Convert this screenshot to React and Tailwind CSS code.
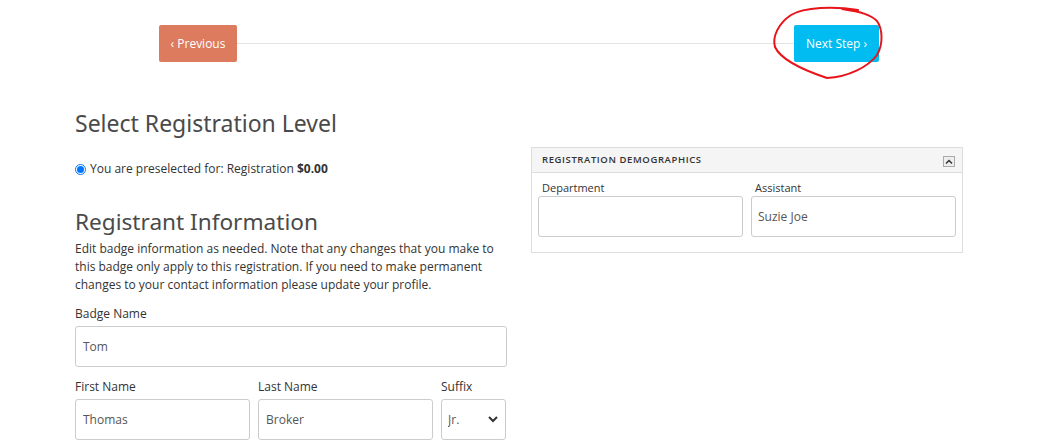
import React from 'react';

const font = { fontFamily: '"Open Sans", "Noto Sans", sans-serif' };
const headFont = { fontFamily: '"Noto Sans", sans-serif' };

const Field = ({ label, value, className = '' }) => (
  <div className={`flex flex-col ${className}`}>
    <label className="text-[12px] leading-[18px] text-[#333] mb-[3px]">{label}</label>
    <input
      readOnly
      value={value}
      className="h-[41px] w-full border border-[#ccc] rounded-[3px] px-[7px] text-[12px] text-[#555] bg-white outline-none"
    />
  </div>
);

const App = () => {
  return (
    <div className="w-[1039px] h-[446px] bg-white overflow-hidden text-[#333]" style={font}>
      {/* step navigation */}
      <div className="flex items-center ml-[159px] w-[720px] mt-[25px]">
        <button className="h-[37px] w-[78px] bg-[#dc7b5e] text-white text-[12px] rounded-[2px] flex items-center justify-center">
          ‹ Previous
        </button>
        <div className="flex-1 h-px bg-[#e3e3e3]" />
        <div className="relative">
          <button className="h-[37px] w-[85px] bg-[#00bcf0] text-white text-[12px] rounded-[2px] flex items-center justify-center">
            Next Step ›
          </button>
          <svg
            className="absolute left-[-22px] top-[-20px] pointer-events-none overflow-visible"
            width="112"
            height="77"
            viewBox="0 0 112 77"
            fill="none"
          >
            <path
              d="M86 5 C62 1 32 2 19 10 C7 18 0 31 3 42 C9 55 34 66 55 73 C76 72 96 62 105 50 C112 38 110 23 105 16 C99 10 90 7 70 4"
              stroke="#e8141a"
              strokeWidth="2"
              strokeLinecap="round"
            />
          </svg>
        </div>
      </div>

      {/* main content */}
      <div className="flex gap-[24px] ml-[75px] mt-[48px]">
        <div className="w-[432px] flex flex-col">
          <h2 className="text-[23px] leading-[26px] text-[#4a4a4a]" style={headFont}>
            Select Registration Level
          </h2>
          <div className="flex items-center mt-[24px] text-[12px] leading-[18px]">
            <span className="w-[11px] h-[11px] rounded-full border border-[#0075ff] flex items-center justify-center mr-[4px]">
              <span className="w-[7px] h-[7px] rounded-full bg-[#0075ff]" />
            </span>
            <span>
              You are preselected for: Registration <b className="font-bold">$0.00</b>
            </span>
          </div>
          <h2 className="text-[22.6px] leading-[26px] text-[#4a4a4a] mt-[31px]" style={headFont}>
            Registrant Information
          </h2>
          <p className="text-[12px] leading-[18px] mt-[5px] w-[430px]">
            Edit badge information as needed. Note that any changes that you make to this badge only apply to this
            registration. If you need to make permanent changes to your contact information please update your profile.
          </p>
          <Field label="Badge Name" value="Tom" className="mt-[11px]" />
          <div className="flex gap-[8px] mt-[11px]">
            <Field label="First Name" value="Thomas" className="w-[175px]" />
            <Field label="Last Name" value="Broker" className="w-[175px]" />
            <div className="flex flex-col w-[65px]">
              <label className="text-[12px] leading-[18px] mb-[3px]">Suffix</label>
              <div className="relative">
                <select
                  defaultValue="Jr."
                  className="appearance-none h-[41px] w-full border border-[#ccc] rounded-[3px] pl-[6px] text-[12px] text-[#555] bg-white outline-none"
                >
                  <option>Jr.</option>
                  <option>Sr.</option>
                </select>
                <svg className="absolute right-[8px] top-[16px] pointer-events-none" width="10" height="8" viewBox="0 0 10 8">
                  <path d="M1 2 L5 6 L9 2" stroke="#333" strokeWidth="2" fill="none" />
                </svg>
              </div>
            </div>
          </div>
        </div>

        <div className="w-[432px] mt-[37px] self-start border border-[#ddd]">
          <div className="h-[25px] bg-[#f5f5f5] border-b border-[#ddd] flex items-center justify-between px-[10px]">
            <span className="text-[9.5px] font-semibold tracking-[0.6px] text-[#333]">REGISTRATION DEMOGRAPHICS</span>
            <span className="w-[12px] h-[11px] border border-[#aaa] bg-[#eee] flex items-center justify-center mt-[3px] mr-[-3px]">
              <svg width="8" height="6" viewBox="0 0 8 6">
                <path d="M1 4.5 L4 1.5 L7 4.5" stroke="#333" strokeWidth="1.5" fill="none" />
              </svg>
            </span>
          </div>
          <div className="flex gap-[8px] px-[6px] pt-[7px] pb-[15px]">
            <div className="flex-1 flex flex-col">
              <label className="text-[11px] leading-[16px] px-[4px]">Department</label>
              <input readOnly value="" className="h-[41px] border border-[#ccc] rounded-[3px] px-[6px] text-[12px] outline-none" />
            </div>
            <div className="flex-1 flex flex-col">
              <label className="text-[11px] leading-[16px] px-[4px]">Assistant</label>
              <input readOnly value="Suzie Joe" className="h-[41px] border border-[#ccc] rounded-[3px] px-[6px] text-[12px] text-[#555] outline-none" />
            </div>
          </div>
        </div>
      </div>
    </div>
  );
};

export default App;
